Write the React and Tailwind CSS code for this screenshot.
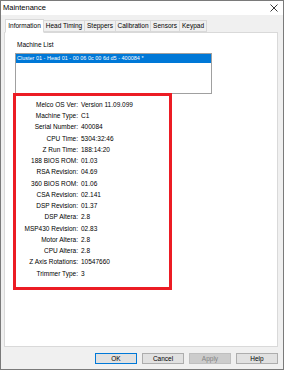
import React from "react";

const tabs = [
    { name: "Information", w: "w-[39px]" },
    { name: "Head Timing", w: "w-[41px]" },
    { name: "Steppers", w: "w-[31px]" },
    { name: "Calibration", w: "w-[35px]" },
    { name: "Sensors", w: "w-[29px]" },
    { name: "Keypad", w: "w-[27px]" },
];

const info = [
    ["Melco OS Ver:", "Version 11.09.099"],
    ["Machine Type:", "C1"],
    ["Serial Number:", "400084"],
    ["CPU Time:", "5304:32:46"],
    ["Z Run Time:", "188:14:20"],
    ["188 BIOS ROM:", "01.03"],
    ["RSA Revision:", "04.69"],
    ["360 BIOS ROM:", "01.06"],
    ["CSA Revision:", "02.141"],
    ["DSP Revision:", "01.37"],
    ["DSP Altera:", "2.8"],
    ["MSP430 Revision:", "02.83"],
    ["Motor Altera:", "2.8"],
    ["CPU Altera:", "2.8"],
    ["Z Axis Rotations:", "10547660"],
    ["Trimmer Type:", "3"],
];

const Button = ({ children, focused, disabled }) => (
    <div
        className={`w-[42px] h-[11px] flex items-center justify-center text-[6.5px] border ${
            focused
                ? "border-[#0078d7] bg-[#e1e1e1] text-black"
                : disabled
                ? "border-[#bfbfbf] bg-[#cccccc] text-[#838383]"
                : "border-[#adadad] bg-[#e1e1e1] text-black"
        }`}
    >
        {children}
    </div>
);

export default function App() {
    return (
        <div className="w-[284px] h-[372px] bg-white" style={{ fontFamily: '"Liberation Sans", Arial, sans-serif' }}>
            <div className="w-[284px] h-[370px] bg-[#f0f0f0] border border-[#7a7a7a] flex flex-col">
                {/* Title bar */}
                <div className="h-[14px] bg-white flex items-center justify-between pl-[2px] pr-[5px]">
                    <span className="text-[7.5px] text-black">Maintenance</span>
                    <svg width="8" height="8" viewBox="0 0 8 8">
                        <path d="M0.5 0.5 L7.5 7.5 M7.5 0.5 L0.5 7.5" stroke="#222" strokeWidth="0.9" />
                    </svg>
                </div>

                {/* Tabs */}
                <div className="flex items-end h-[17px] pl-[4px]">
                    {tabs.map((t, i) => (
                        <div
                            key={t.name}
                            className={`${t.w} flex items-center justify-center text-[6.5px] text-black border border-[#d9d9d9] ${
                                i === 0 ? "h-[14px] bg-white border-b-white -mb-[1px] relative z-10" : "h-[12px] bg-[#f0f0f0] border-l-0"
                            }`}
                        >
                            {t.name}
                        </div>
                    ))}
                </div>

                {/* Panel */}
                <div className="ml-[3px] w-[274px] h-[315px] bg-white border border-[#d9d9d9] pt-[8px] pl-[12px]">
                    <div className="text-[6.5px] text-black leading-[8px]">Machine List</div>
                    <div className="mt-[4px] -ml-[2px] w-[197px] h-[41px] border border-[#a0a0a0] bg-white">
                        <div className="h-[9px] bg-[#0078d7] text-white text-[5.5px] leading-[9px] pl-[1px] whitespace-nowrap">
                            Cluster 01 - Head 01 - 00 06 0c 00 6d d5 - 400084 *
                        </div>
                    </div>
                    <div className="-mt-[1px] -ml-[4px] w-[159px] h-[197px] border-[3px] border-[#ec1c24] pt-[3px] relative z-10">
                        {info.map(([k, v]) => (
                            <div key={k} className="flex h-[11.25px] items-center text-[6.5px] text-black whitespace-nowrap">
                                <span className="w-[62px] text-right">{k}</span>
                                <span className="ml-[3px]">{v}</span>
                            </div>
                        ))}
                    </div>
                </div>

                {/* Buttons */}
                <div className="flex justify-end gap-[5px] pr-[5px] mt-[6px]">
                    <Button focused>OK</Button>
                    <Button>Cancel</Button>
                    <Button disabled>Apply</Button>
                    <Button>Help</Button>
                </div>
            </div>
        </div>
    );
}
